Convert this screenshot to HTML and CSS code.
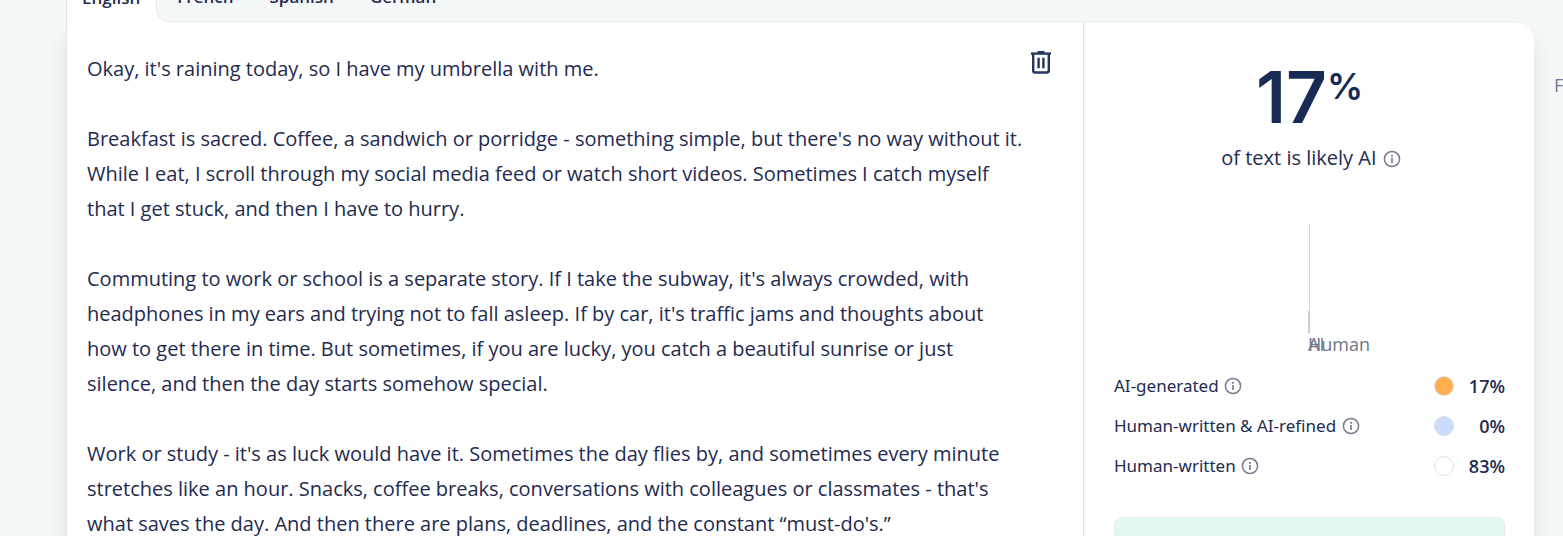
FILE: index.html
```html
<!DOCTYPE html>
<html lang="en">
<head>
<meta charset="utf-8">
<title>AI Detector</title>
<link rel="stylesheet" href="styles.css">
</head>
<body>

<!-- shared info icon -->
<svg class="sprite" aria-hidden="true">
  <symbol id="info" viewBox="0 0 18 18">
    <circle cx="9" cy="9" r="7.6" fill="none" stroke="currentColor" stroke-width="1.5"/>
    <path d="M9 8v5" stroke="currentColor" stroke-width="1.7"/>
    <path d="M9 4.9v1.8" stroke="currentColor" stroke-width="1.8"/>
  </symbol>
</svg>

<div class="page">
  <main class="detector">
    <div class="tabs">
      <button type="button" class="tab tab-active">English</button>
      <div class="tabs-rest">
        <button type="button" class="tab">French</button>
        <button type="button" class="tab">Spanish</button>
        <button type="button" class="tab">German</button>
      </div>
    </div>

    <div class="card">
      <section class="editor">
        <textarea class="editor-text" aria-label="Text to check" rows="14" spellcheck="false">Okay, it's raining today, so I have my umbrella with me.

Breakfast is sacred. Coffee, a sandwich or porridge - something simple, but there's no way without it. While I eat, I scroll through my social media feed or watch short videos. Sometimes I catch myself that I get stuck, and then I have to hurry.

Commuting to work or school is a separate story. If I take the subway, it's always crowded, with headphones in my ears and trying not to fall asleep. If by car, it's traffic jams and thoughts about how to get there in time. But sometimes, if you are lucky, you catch a beautiful sunrise or just silence, and then the day starts somehow special.

Work or study - it's as luck would have it. Sometimes the day flies by, and sometimes every minute stretches like an hour. Snacks, coffee breaks, conversations with colleagues or classmates - that's what saves the day. And then there are plans, deadlines, and the constant “must-do's.”</textarea>
        <button type="button" class="clear" aria-label="Clear text">
          <svg width="22" height="24" viewBox="0 0 22 24" fill="none" stroke="currentColor">
            <path d="M1 2.6h20" stroke-width="2.4"/>
            <path d="M7.5 1h7" stroke-width="2"/>
            <path d="M3.2 2.5v17q0 2 2 2h11.6q2 0 2-2V2.5" stroke-width="2.4"/>
            <path d="M8.6 6.8v10.5M13.4 6.8v10.5" stroke-width="2.4"/>
          </svg>
        </button>
      </section>

      <section class="result">
        <p class="score">17<span class="score-sign">%</span></p>
        <p class="score-text">of text is likely AI <svg class="info"><use href="#info"/></svg></p>

        <div class="chart">
          <div class="chart-line"></div>
          <div class="chart-tick"></div>
          <div class="chart-labels">
            <span>AI</span>
            <span>Human</span>
          </div>
        </div>

        <table class="legend">
          <tr>
            <th scope="row">AI-generated <svg class="info"><use href="#info"/></svg></th>
            <td><span class="dot dot-ai"></span></td>
            <td class="value">17%</td>
          </tr>
          <tr>
            <th scope="row">Human-written &amp; AI-refined <svg class="info"><use href="#info"/></svg></th>
            <td><span class="dot dot-refined"></span></td>
            <td class="value">0%</td>
          </tr>
          <tr>
            <th scope="row">Human-written <svg class="info"><use href="#info"/></svg></th>
            <td><span class="dot dot-human"></span></td>
            <td class="value">83%</td>
          </tr>
        </table>

        <div class="notice"></div>
      </section>
    </div>
  </main>

  <aside class="side">F</aside>
</div>

</body>
</html>
```

FILE: styles.css
```css
* {
  box-sizing: border-box;
}

body {
  margin: 0;
  background: #f5f8f8;
  color: #232b50;
  font-family: "Open Sans", "Noto Sans", sans-serif;
}

button {
  border: 0;
  background: none;
  color: inherit;
  font-family: inherit;
  cursor: pointer;
}

p {
  margin: 0;
}

.sprite {
  position: absolute;
  width: 0;
  height: 0;
}

.page {
  display: flex;
  height: 100vh;
  padding-left: 66px;
  overflow: hidden;
}

.detector {
  display: flex;
  flex-direction: column;
  flex: 1;
  min-width: 0;
}

/* language tabs, scrolled half way under the top edge */
.tabs {
  position: relative;
  z-index: 1;
  display: flex;
  flex-shrink: 0;
  height: 22px;
  margin-right: 16px;
  overflow: hidden;
  align-items: flex-end;
  background: #fff;
  border-left: 1px solid #e2e4e8;
}

.tab {
  height: 48px;
  padding: 0 15px;
  font-size: 17px;
  font-weight: 600;
  line-height: 24px;
}

.tab-active {
  padding-right: 16px;
}

.tabs-rest {
  display: flex;
  flex: 1;
  gap: 6px;
  padding-left: 5px;
  background: #f5f8f8;
  border-left: 1px solid #e2e4e8;
  border-bottom: 1px solid #e7e9ec;
  border-bottom-left-radius: 14px;
}

.card {
  display: flex;
  flex: 1;
  background: #fff;
  border-left: 1px solid #e2e4e8;
  border-top-right-radius: 20px;
  box-shadow: 0 16px 20px rgba(30, 35, 50, 0.12);
}

.editor {
  display: flex;
  flex: 1;
  align-items: flex-start;
  justify-content: space-between;
  padding: 29px 31px 0 20px;
}

.editor-text {
  flex: 1;
  min-width: 0;
  margin-right: 5px;
  padding: 0;
  border: 0;
  outline: 0;
  resize: none;
  overflow: hidden;
  background: none;
  color: inherit;
  font-family: inherit;
  font-size: 20px;
  line-height: 35px;
}

.clear {
  display: flex;
  padding: 0;
  color: #25375f;
}

.result {
  width: 451px;
  padding: 30px 29px 0 30px;
  border-left: 1px solid #dcdde0;
}

.score {
  display: flex;
  justify-content: center;
  color: #172b54;
  font-family: Inter, "Open Sans", sans-serif;
  font-size: 71px;
  font-weight: 600;
  line-height: 90px;
}

.score-sign {
  font-size: 36px;
  line-height: 68px;
}

.score-text {
  padding-left: 3px;
  font-size: 20px;
  line-height: 32px;
  text-align: center;
}

.info {
  width: 18px;
  height: 18px;
  margin-left: 1px;
  color: #7a7b92;
  vertical-align: -3px;
}

.chart {
  width: 50%;
  margin: 50px auto 11px 194px;
}

.chart-line {
  width: 1px;
  height: 87px;
  margin-left: 1px;
  background: #d8d8dc;
}

.chart-tick {
  width: 2px;
  height: 22px;
  background: #d0d0d4;
}

/* both labels start from the same point of the axis */
.chart-labels {
  display: grid;
  color: #70748c;
  font-size: 18px;
  line-height: 22px;
}

.chart-labels span {
  grid-area: 1 / 1;
}

.legend {
  width: 100%;
  border-collapse: collapse;
  font-size: 18px;
  line-height: 24px;
}

.legend th,
.legend td {
  height: 40px;
  padding: 0;
  font-weight: 400;
  text-align: left;
}

.legend th {
  font-family: "Noto Sans", sans-serif;
  font-size: 17px;
}

.legend .value {
  width: 51px;
  font-weight: 600;
  text-align: right;
}

.dot {
  display: block;
  width: 20px;
  height: 20px;
  margin-left: auto;
  border: 1px solid #dcdde2;
  border-radius: 50%;
}

.dot-ai {
  background: #ffae52;
}

.dot-refined {
  background: #c9dcfc;
}

.dot-human {
  background: #fff;
}

.notice {
  height: 80px;
  margin-top: 31px;
  background: #e2f8f0;
  border: 1px solid #e0efea;
  border-radius: 8px;
}

.side {
  width: 29px;
  padding: 73px 0 0 20px;
  overflow: hidden;
  color: #74788f;
  font-size: 18px;
  line-height: 24px;
}
```
